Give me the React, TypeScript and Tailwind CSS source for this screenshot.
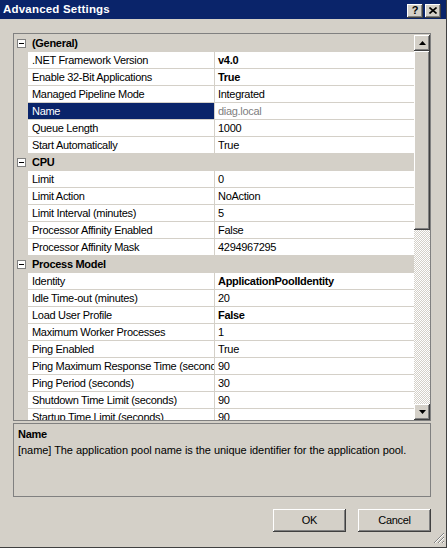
import React from "react";

type Row = { label: string; value: string; bold?: boolean; selected?: boolean; readOnly?: boolean };
type Section = { title: string; rows: Row[] };

const sections: Section[] = [
  {
    title: "(General)",
    rows: [
      { label: ".NET Framework Version", value: "v4.0", bold: true },
      { label: "Enable 32-Bit Applications", value: "True", bold: true },
      { label: "Managed Pipeline Mode", value: "Integrated" },
      { label: "Name", value: "diag.local", selected: true, readOnly: true },
      { label: "Queue Length", value: "1000" },
      { label: "Start Automatically", value: "True" },
    ],
  },
  {
    title: "CPU",
    rows: [
      { label: "Limit", value: "0" },
      { label: "Limit Action", value: "NoAction" },
      { label: "Limit Interval (minutes)", value: "5" },
      { label: "Processor Affinity Enabled", value: "False" },
      { label: "Processor Affinity Mask", value: "4294967295" },
    ],
  },
  {
    title: "Process Model",
    rows: [
      { label: "Identity", value: "ApplicationPoolIdentity", bold: true },
      { label: "Idle Time-out (minutes)", value: "20" },
      { label: "Load User Profile", value: "False", bold: true },
      { label: "Maximum Worker Processes", value: "1" },
      { label: "Ping Enabled", value: "True" },
      { label: "Ping Maximum Response Time (seconds)", value: "90" },
      { label: "Ping Period (seconds)", value: "30" },
      { label: "Shutdown Time Limit (seconds)", value: "90" },
      { label: "Startup Time Limit (seconds)", value: "90" },
    ],
  },
];

// classic raised 3D look
const raised =
  "bg-[#d4d0c8] shadow-[inset_-1px_-1px_#404040,inset_1px_1px_#ffffff,inset_-2px_-2px_#808080,inset_2px_2px_#d4d0c8]";

function Arrow({ down }: { down?: boolean }) {
  return (
    <svg width="7" height="4" viewBox="0 0 7 4">
      {down ? <path d="M0 0h7L3.5 4z" fill="#000" /> : <path d="M0 4h7L3.5 0z" fill="#000" />}
    </svg>
  );
}

function MinusBox() {
  return (
    <div className="w-[9px] h-[9px] border border-[#808080] bg-white flex items-center justify-center">
      <div className="w-[5px] h-[1px] bg-black" />
    </div>
  );
}

export default function App() {
  return (
    <div className="w-[447px] h-[548px] bg-[#d4d0c8] relative flex flex-col border-r border-b border-[#404040] font-['Liberation_Sans',Arial,sans-serif] text-[11px] tracking-[-0.3px] text-black overflow-hidden">
      {/* title bar */}
      <div className="h-[19px] bg-[#0a246a] flex items-center pl-[3px] pr-[5px]">
        <span className="text-white font-bold text-[11.5px] tracking-[0.2px] flex-1">Advanced Settings</span>
        <div className="flex gap-[2px] mt-[2px]">
          <div className={`w-[16px] h-[14px] ${raised} flex items-center justify-center font-bold text-[11px] leading-none`}>?</div>
          <div className={`w-[16px] h-[14px] ${raised} flex items-center justify-center`}>
            <svg width="8" height="7" viewBox="0 0 8 7">
              <path d="M0.5 0.5L7.5 6.5M7.5 0.5L0.5 6.5" stroke="#000" strokeWidth="1.6" />
            </svg>
          </div>
        </div>
      </div>

      <div className="flex flex-col pl-[13px] pr-[15px] mt-[14px]">
        {/* property grid */}
        <div className="h-[388px] border border-[#808080] flex pt-[1px] bg-[#d4d0c8]">
          <div className="flex-1 overflow-hidden">
            {sections.map((s) => (
              <div key={s.title}>
                <div className="h-[17px] flex items-center">
                  <div className="w-[14px] flex justify-center pl-[1px]">
                    <MinusBox />
                  </div>
                  <span className="pl-[4px] font-bold">{s.title}</span>
                </div>
                {s.rows.map((r) => (
                  <div key={r.label} className="h-[17px] flex">
                    <div className="w-[14px] bg-[#d4d0c8]" />
                    <div className="flex-1 flex border-b border-[#d4d0c8]">
                      <div
                        className={`w-[187px] border-r border-[#d4d0c8] pl-[4px] whitespace-nowrap overflow-hidden leading-[16px] ${
                          r.selected ? "bg-[#0a246a] text-white" : "bg-white"
                        }`}
                      >
                        {r.label}
                      </div>
                      <div
                        className={`flex-1 bg-white pl-[3px] whitespace-nowrap overflow-hidden leading-[16px] ${
                          r.bold ? "font-bold" : ""
                        } ${r.readOnly ? "text-[#808080]" : ""}`}
                      >
                        {r.value}
                      </div>
                    </div>
                  </div>
                ))}
              </div>
            ))}
          </div>
          {/* scrollbar */}
          <div className="w-[16px] flex flex-col">
            <div className={`h-[16px] ${raised} flex items-center justify-center`}>
              <Arrow />
            </div>
            <div className={`h-[179px] ${raised}`} />
            <div className="flex-1 bg-[repeating-conic-gradient(#d4d0c8_0_25%,#ffffff_0_50%)] bg-[length:2px_2px]" />
            <div className={`h-[16px] ${raised} flex items-center justify-center`}>
              <Arrow down />
            </div>
          </div>
        </div>

        {/* description */}
        <div className="mt-[2px] h-[74px] border border-[#808080] px-[4px] pt-[2px] leading-[16px]">
          <div className="font-bold">Name</div>
          <div className="tracking-[-0.05px]">
            [name] The application pool name is the unique identifier for the application pool.
          </div>
        </div>

        {/* buttons */}
        <div className="mt-[12px] flex justify-end gap-[12px]">
          <button className={`w-[73px] h-[23px] ${raised} text-[11px]`}>OK</button>
          <button className={`w-[73px] h-[23px] ${raised} text-[11px]`}>Cancel</button>
        </div>
      </div>

      {/* resize grip */}
      <svg className="absolute right-[1px] bottom-[3px]" width="12" height="12" viewBox="0 0 12 12">
        <path d="M11 1L1 11M11 5L5 11M11 9L9 11" stroke="#808080" strokeWidth="1" />
        <path d="M11 2L2 11M11 6L6 11M11 10L10 11" stroke="#ffffff" strokeWidth="1" />
      </svg>
    </div>
  );
}
